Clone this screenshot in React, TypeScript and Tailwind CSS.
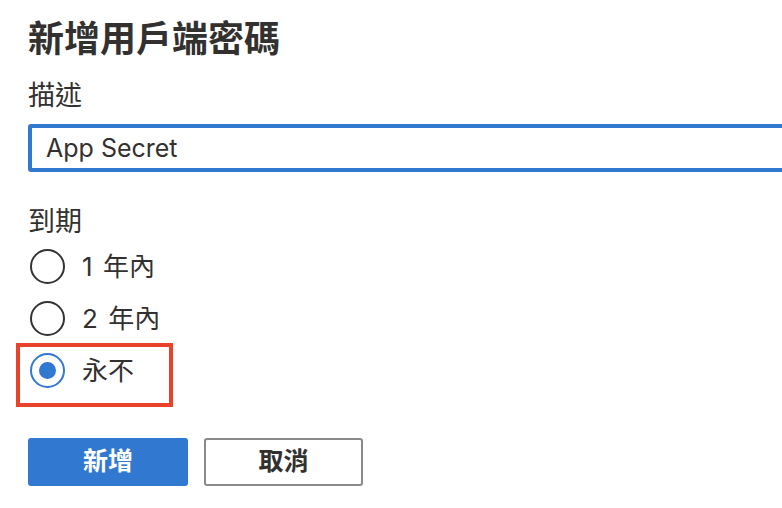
import React, { useState } from 'react';

const options = [
    { id: '1y', label: '1 年內' },
    { id: '2y', label: '2 年內' },
    { id: 'never', label: '永不' },
];

export default function App() {
    const [expiry, setExpiry] = useState('never');
    const [desc, setDesc] = useState('App Secret');

    return (
        <div
            className="w-[782px] h-[508px] overflow-hidden bg-white pl-7 text-[#323130]"
            style={{ fontFamily: 'Inter, "Noto Sans CJK TC", sans-serif' }}
        >
            <h1 className="text-[36px] font-bold leading-[78px] whitespace-nowrap">新增用戶端密碼</h1>

            <label className="block text-[27px] leading-[36px]">描述</label>
            <input
                value={desc}
                onChange={(e) => setDesc(e.target.value)}
                className="mt-[10px] h-[48px] w-[800px] rounded-[3px] border-4 border-[#3178d0] pl-[14px] text-[25px] text-[#323130] outline-none"
            />

            <div className="mt-[32px] text-[27px] leading-[36px]">到期</div>

            <div className="flex flex-col">
                {options.map((opt) => {
                    const checked = expiry === opt.id;
                    return (
                        <div key={opt.id} className="relative flex h-[52px] items-center">
                            <button
                                type="button"
                                onClick={() => setExpiry(opt.id)}
                                className={`ml-[2px] flex h-[35px] w-[35px] items-center justify-center rounded-full border-2 ${
                                    checked ? 'border-[#3178d0]' : 'border-[#333333]'
                                }`}
                            >
                                {checked && <span className="h-[17px] w-[17px] rounded-full bg-[#3178d0]" />}
                            </button>
                            <span className="ml-[17px] text-[26px] [word-spacing:3px]">{opt.label}</span>
                            {opt.id === 'never' && (
                                <div className="pointer-events-none absolute left-[-12px] top-[-1px] h-[64px] w-[157px] border-4 border-[#e8432a]" />
                            )}
                        </div>
                    );
                })}
            </div>

            <div className="mt-[42px] flex gap-4">
                <button className="h-[48px] w-[160px] rounded-[3px] bg-[#3178d0] text-[25px] font-bold text-white">新增</button>
                <button className="h-[48px] w-[159px] rounded-[3px] border-2 border-[#8a8a8a] bg-white text-[25px] font-bold text-[#323130]">取消</button>
            </div>
        </div>
    );
}
